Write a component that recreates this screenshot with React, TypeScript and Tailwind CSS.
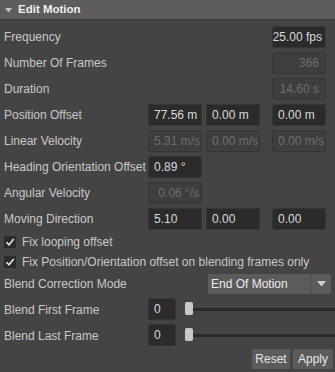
import React from 'react';

type FieldProps = {
  value: string;
  disabled?: boolean;
  align?: 'left' | 'right';
  width?: string;
  className?: string;
};

const Field: React.FC<FieldProps> = ({ value, disabled = false, align = 'left', width = 'w-[54px]', className = '' }) => (
  <div
    className={`${width} h-[22px] flex items-center shrink-0 overflow-hidden whitespace-nowrap rounded-[2px] border px-[5px] ${
      align === 'right' ? 'justify-end' : 'justify-start'
    } ${disabled ? 'bg-[#3e3e3e] border-[#353535] text-[#6e6e6e]' : 'bg-[#2b2b2b] border-[#363636] text-[#dadada]'} ${className}`}
  >
    {value}
  </div>
);

const Row: React.FC<{ label: string; children?: React.ReactNode }> = ({ label, children }) => (
  <div className="flex items-center h-[26px] pl-[4px]">
    <span className="w-[144px] shrink-0 whitespace-nowrap">{label}</span>
    {children}
  </div>
);

const Check: React.FC<{ label: string }> = ({ label }) => (
  <div className="flex items-center h-[20px] pl-[4px]">
    <div className="w-[12px] h-[12px] bg-[#2b2b2b] flex items-center justify-center shrink-0">
      <svg width="10" height="10" viewBox="0 0 10 10">
        <path d="M1.5 5.2 L4 7.8 L8.7 2" stroke="#e8e8e8" strokeWidth="1.6" fill="none" />
      </svg>
    </div>
    <span className="ml-[6px] whitespace-nowrap">{label}</span>
  </div>
);

const Slider: React.FC<{ value: string }> = ({ value }) => (
  <div className="flex items-center h-[26px] pl-[148px] relative">
    <Field value={value} width="w-[28px]" />
    <div className="flex-1 ml-[9px] relative h-[14px] flex items-center">
      <div className="w-full h-[3px] bg-[#2a2a2a]" />
      <div className="absolute left-0 top-0 w-[8px] h-[13px] rounded-[2px] bg-[#c9c9c9]" />
    </div>
  </div>
);

export default function App() {
  return (
    <div
      className="w-[335px] h-[372px] bg-[#444444] text-[#c9c9c9] text-[12px] overflow-hidden"
      style={{ fontFamily: '"Liberation Sans", Arial, sans-serif' }}
    >
      <div className="h-[20px] bg-[#5d5d5d] border-b border-[#3a3a3a] flex items-center pl-[5px]">
        <svg width="7" height="5" viewBox="0 0 7 5" className="mt-[1px]">
          <path d="M0 0 H7 L3.5 4.5 Z" fill="#c0c0c0" />
        </svg>
        <span className="ml-[6px] font-bold text-[#f0f0f0] text-[11.5px]">Edit Motion</span>
      </div>

      <div className="pt-[4px]">
        <Row label="Frequency">
          <Field value="25.00 fps" align="right" className="ml-[124px] !px-[3px]" />
        </Row>
        <Row label="Number Of Frames">
          <Field value="366" disabled align="right" className="ml-[124px] !pr-[6px]" />
        </Row>
        <Row label="Duration">
          <Field value="14.60 s" disabled align="right" className="ml-[124px] !pr-[6px]" />
        </Row>
        <Row label="Position Offset">
          <Field value="77.56 m" />
          <Field value="0.00 m" className="ml-[4px]" />
          <Field value="0.00 m" className="ml-[12px]" />
        </Row>
        <Row label="Linear Velocity">
          <Field value="5.31 m/s" disabled />
          <Field value="0.00 m/s" disabled className="ml-[4px]" />
          <Field value="0.00 m/s" disabled className="ml-[12px]" />
        </Row>
        <Row label="Heading Orientation Offset">
          <Field value="0.89 °" />
        </Row>
        <Row label="Angular Velocity">
          <Field value="0.06 °/s" disabled align="right" className="!pr-[2px]" />
        </Row>
        <Row label="Moving Direction">
          <Field value="5.10" />
          <Field value="0.00" className="ml-[4px]" />
          <Field value="0.00" className="ml-[12px]" />
        </Row>

        <Check label="Fix looping offset" />
        <Check label="Fix Position/Orientation offset on blending frames only" />

        <div className="flex items-center h-[24px] pl-[4px]">
          <span className="w-[204px] shrink-0 whitespace-nowrap">Blend Correction Mode</span>
          <div className="w-[123px] h-[20px] bg-[#5b5b5b] flex items-center text-[#ececec]">
            <span className="flex-1 pl-[3px]">End Of Motion</span>
            <div className="w-[20px] h-full flex items-center justify-center border-l border-[#525252]">
              <svg width="9" height="6" viewBox="0 0 9 6">
                <path d="M0 0 H9 L4.5 5.5 Z" fill="#cfcfcf" />
              </svg>
            </div>
          </div>
        </div>

        <div className="relative">
          <span className="absolute left-[4px] top-[5px]">Blend First Frame</span>
          <Slider value="0" />
        </div>
        <div className="relative">
          <span className="absolute left-[4px] top-[5px]">Blend Last Frame</span>
          <Slider value="0" />
        </div>

        <div className="flex justify-end items-center gap-[3px] pr-[2px] pt-[1px]">
          <button className="w-[38px] h-[20px] bg-[#5b5b5b] text-[#e6e6e6]">Reset</button>
          <button className="w-[40px] h-[20px] bg-[#5b5b5b] text-[#e6e6e6]">Apply</button>
        </div>
      </div>
    </div>
  );
}
